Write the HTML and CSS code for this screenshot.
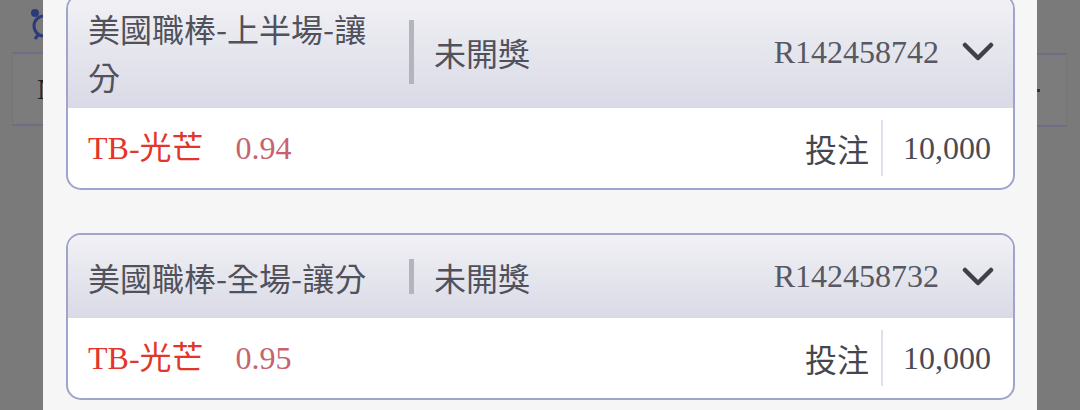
FILE: index.html
```html
<!DOCTYPE html>
<html lang="zh-Hant">
<head>
    <meta charset="UTF-8">
    <meta name="viewport" content="width=device-width, initial-scale=1.0">
    <title>投注紀錄</title>
    <link rel="stylesheet" href="styles.css">
</head>
<body>
<div class="screen">
    <!-- dimmed page behind the sheet -->
    <div class="shade shade-left">
        <svg class="clock" width="24" height="34" viewBox="0 0 24 34">
            <circle cx="14" cy="19" r="10" fill="none" stroke="#2c3a7c" stroke-width="3"/>
            <circle cx="5" cy="6" r="4" fill="#2c3a7c"/>
            <path d="M8 28 L5 32" stroke="#2c3a7c" stroke-width="3"/>
        </svg>
        <div class="shade-row"><span class="shade-text">N</span></div>
    </div>

    <div class="sheet">
        <div class="list">
            <div class="card">
                <div class="card-head">
                    <div class="title">美國職棒-上半場-讓分</div>
                    <div class="divider"></div>
                    <div class="status">未開獎</div>
                    <div class="order">R142458742</div>
                    <svg class="chevron" width="32" height="22" viewBox="0 0 32 22">
                        <polyline points="3,4 16,17 29,4" fill="none" stroke="#3f4049" stroke-width="4.5" stroke-linejoin="round" stroke-linecap="round"/>
                    </svg>
                </div>
                <div class="card-body">
                    <span class="team">TB-光芒</span>
                    <span class="odds">0.94</span>
                    <span class="label">投注</span>
                    <span class="amount">10,000</span>
                </div>
            </div>

            <div class="card">
                <div class="card-head">
                    <div class="title">美國職棒-全場-讓分</div>
                    <div class="divider"></div>
                    <div class="status">未開獎</div>
                    <div class="order">R142458732</div>
                    <svg class="chevron" width="32" height="22" viewBox="0 0 32 22">
                        <polyline points="3,4 16,17 29,4" fill="none" stroke="#3f4049" stroke-width="4.5" stroke-linejoin="round" stroke-linecap="round"/>
                    </svg>
                </div>
                <div class="card-body">
                    <span class="team">TB-光芒</span>
                    <span class="odds">0.95</span>
                    <span class="label">投注</span>
                    <span class="amount">10,000</span>
                </div>
            </div>
        </div>
    </div>

    <div class="shade shade-right">
        <div class="shade-row"><span class="dot"></span></div>
    </div>
</div>
</body>
</html>
```

FILE: styles.css
```css
body {
    margin: 0;
    font-family: "Noto Sans CJK TC", sans-serif;
    background-color: #7a7a7a;
}

.screen {
    display: grid;
    grid-template-columns: 43px 1fr 43px;
    height: 410px;
    overflow: hidden;
}

/* dimmed background page */
.shade {
    background-color: #7a7a7a;
    overflow: hidden;
    padding-top: 7px;
}

.clock {
    display: block;
    margin-left: 30px;
}

.shade-row {
    display: flex;
    align-items: center;
    height: 70px;
    margin-top: 11px;
    border-top: 2px solid #6c6e88;
    border-bottom: 2px solid #6c6e88;
    background-color: #7c7c7c;
}

.shade-left .shade-row {
    margin-left: 12px;
    border-left: 1px solid #757575;
}

.shade-right .shade-row {
    margin-right: 13px;
    margin-top: 46px;
    border-right: 1px solid #757575;
}

.shade-text {
    padding-left: 24px;
    font-family: "Liberation Serif", serif;
    font-size: 30px;
    color: #1c1e2e;
}

.dot {
    width: 3px;
    height: 3px;
    background-color: #333;
}

/* the sheet */
.sheet {
    background-color: #f6f6f6;
    padding: 0 22px 0 23px;
    overflow: hidden;
}

.list {
    margin-top: -6px;
}

.card {
    border: 2px solid #a0a4cb;
    border-radius: 15px;
    overflow: hidden;
    background-color: #fff;
    margin-bottom: 43px;
}

.card-head {
    display: flex;
    align-items: center;
    box-sizing: border-box;
    min-height: 83px;
    padding: 8px 19px 8px 20px;
    background: linear-gradient(#f1f1f5, #d9dae6);
}

.title {
    width: 300px;
    font-size: 32px;
    line-height: 48px;
    color: #50515b;
}

.divider {
    align-self: stretch;
    width: 5px;
    margin: 0 20px 0 21px;
    background: linear-gradient(#b3b5be, #b3b5be) center / 5px calc(100% - 32px) no-repeat;
}

.status {
    flex: 1;
    font-size: 32px;
    line-height: 48px;
    color: #50515b;
}

.order {
    font-family: "Liberation Serif", serif;
    font-size: 32px;
    color: #575862;
}

.chevron {
    display: block;
    margin-left: 23px;
}

.card-body {
    display: flex;
    align-items: center;
    padding: 12px 22px 12px 20px;
    line-height: 56px;
    font-size: 32px;
    font-family: "Liberation Serif", "Noto Sans CJK TC", serif;
}

.team {
    color: #e2352b;
}

.odds {
    flex: 1;
    margin-left: 32px;
    color: #c6636e;
}

.label {
    font-family: "Noto Sans CJK TC", sans-serif;
    color: #45464e;
    padding-right: 12px;
}

.amount {
    border-left: 2px solid #dde0f0;
    padding-left: 20px;
    color: #4a4b56;
}
```
